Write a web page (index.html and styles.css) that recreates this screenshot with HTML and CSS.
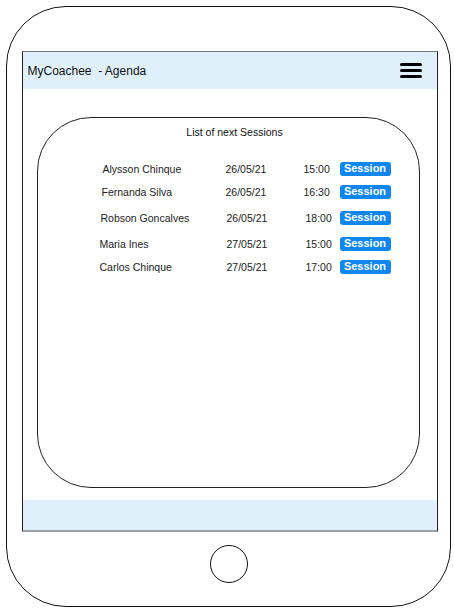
FILE: index.html
```html
<!DOCTYPE html>
<html>
<head>
<meta charset="utf-8">
<link rel="stylesheet" href="styles.css">
</head>
<body>
<div class="phone">
  <div class="screen">
    <header class="topbar">
      <span class="app-title">MyCoachee&nbsp; - Agenda</span>
      <span class="menu"><i></i><i></i><i></i></span>
    </header>
    <main class="content">
      <section class="card">
        <div class="card-title">List of next Sessions</div>
        <div class="list">
          <div class="row r1"><span class="name">Alysson Chinque</span><span class="date">26/05/21</span><span class="time">15:00</span><span class="btn">Session</span></div>
          <div class="row r2"><span class="name">Fernanda Silva</span><span class="date">26/05/21</span><span class="time">16:30</span><span class="btn">Session</span></div>
          <div class="row r3"><span class="name">Robson Goncalves</span><span class="date">26/05/21</span><span class="time">18:00</span><span class="btn">Session</span></div>
          <div class="row r4"><span class="name">Maria Ines</span><span class="date">27/05/21</span><span class="time">15:00</span><span class="btn">Session</span></div>
          <div class="row r5"><span class="name">Carlos Chinque</span><span class="date">27/05/21</span><span class="time">17:00</span><span class="btn">Session</span></div>
        </div>
      </section>
    </main>
    <footer class="bottombar"></footer>
  </div>
  <div class="home"></div>
</div>
</body>
</html>
```

FILE: styles.css
```css
* { box-sizing: border-box; }
html, body { margin: 0; padding: 0; background: #fff; }
body {
  font-family: "Liberation Sans", Arial, sans-serif;
  color: #222;
  width: 454px;
  height: 611px;
  overflow: hidden;
}
.phone {
  margin: 6px 0 0 6px;
  width: 445px;
  height: 601px;
  border: 1.5px solid #111;
  border-radius: 60px;
  padding: 43.5px 0 0 14.5px;
  display: flex;
  flex-direction: column;
}
.screen {
  width: 416px;
  height: 481px;
  border-left: 1px solid #222;
  border-right: 1px solid #222;
  border-top: 1px solid #777;
  border-bottom: 2px solid #9aa0a6;
  display: flex;
  flex-direction: column;
}
.topbar {
  height: 37px;
  background: #dff0fb;
  display: flex;
  align-items: center;
  justify-content: space-between;
  padding: 0 15px 0 5px;
}
.app-title {
  font-size: 12px;
  color: #111;
  padding-top: 1px;
}
.menu {
  width: 22px;
  display: flex;
  flex-direction: column;
  gap: 3.3px;
  padding-top: 1px;
}
.menu i {
  display: block;
  height: 3px;
  background: #000;
  border-radius: 1.5px;
}
.content {
  flex: 1;
  display: flex;
  padding: 28px 17px 12px 14px;
}
.card {
  flex: 1;
  border: 1.3px solid #222;
  border-radius: 54px;
  padding-top: 8px;
}
.card-title {
  font-size: 10.5px;
  line-height: 13px;
  text-align: center;
  padding-left: 13px;
  color: #111;
}
.list {
  margin-top: 23px;
  padding-left: 63px;
  display: flex;
  flex-direction: column;
}
.row {
  display: grid;
  grid-template-columns: 126px 79px 34px 51px;
  align-items: center;
  height: 14px;
  font-size: 10.5px;
  color: #222;
  margin-top: 9px;
}
.row.r1 { margin-top: 0; }
.row.r3, .row.r4 { margin-top: 12px; }
.row.r5 { margin-top: 9.5px; }
.r1 .name { padding-left: 2px; }
.r2 .name { padding-left: 1px; }
.r4 .name, .r5 .name { margin-left: -1px; }
.r1 .date, .r2 .date { margin-left: -1px; }
.r1 .time, .r2 .time { margin-left: -2px; }
.btn {
  height: 14px;
  background: #0f86f0;
  color: #fff;
  font-weight: bold;
  font-size: 11px;
  line-height: 13px;
  text-align: center;
  border-radius: 3px;
}
.bottombar {
  height: 30px;
  background: #dff0fb;
}
.home {
  align-self: center;
  margin-top: 13px;
  width: 38px;
  height: 38px;
  border: 1.3px solid #111;
  border-radius: 50%;
  margin-left: -14px;
}
```
